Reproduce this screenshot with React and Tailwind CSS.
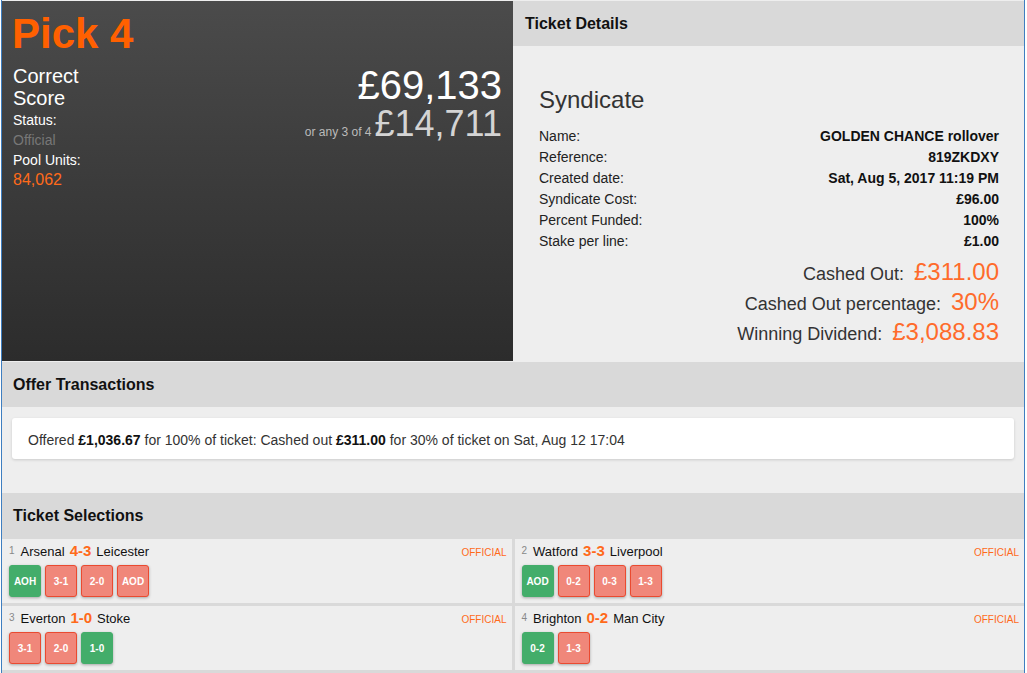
const details = [
  ["Name:", "GOLDEN CHANCE rollover"],
  ["Reference:", "819ZKDXY"],
  ["Created date:", "Sat, Aug 5, 2017 11:19 PM"],
  ["Syndicate Cost:", "£96.00"],
  ["Percent Funded:", "100%"],
  ["Stake per line:", "£1.00"],
];

const totals = [
  ["Cashed Out:", "£311.00"],
  ["Cashed Out percentage:", "30%"],
  ["Winning Dividend:", "£3,088.83"],
];

const selections = [
  { n: 1, home: "Arsenal", score: "4-3", away: "Leicester", picks: [["AOH", true], ["3-1", false], ["2-0", false], ["AOD", false]] },
  { n: 2, home: "Watford", score: "3-3", away: "Liverpool", picks: [["AOD", true], ["0-2", false], ["0-3", false], ["1-3", false]] },
  { n: 3, home: "Everton", score: "1-0", away: "Stoke", picks: [["3-1", false], ["2-0", false], ["1-0", true]] },
  { n: 4, home: "Brighton", score: "0-2", away: "Man City", picks: [["0-2", true], ["1-3", false]] },
];

function SectionHeader({ children }) {
  return (
    <div className="flex h-[45px] items-center bg-[#d9d9d9] px-[11px] text-base font-bold text-[#111]">
      {children}
    </div>
  );
}

function Pick({ label, win }) {
  return (
    <div
      className={
        win
          ? "flex h-8 w-8 items-center justify-center rounded-[3px] border border-[#43ad6a] bg-[#43ad6a] text-[10px] font-bold text-white shadow-[0_1px_3px_rgba(0,0,0,0.3)]"
          : "flex h-8 w-8 items-center justify-center rounded-[3px] border border-[#ea4a30] bg-[#f0877a] text-[10px] font-bold text-white shadow-[0_1px_3px_rgba(0,0,0,0.3)]"
      }
    >
      {label}
    </div>
  );
}

export default function App() {
  return (
    <div className="min-h-screen bg-white font-['Liberation_Sans',Arial,sans-serif]">
      <div className="ml-px w-[1024px] border-x border-[#3e7ec0] bg-[#eee] pt-px">
        <div className="grid grid-cols-2">
          <div className="h-[360px] bg-gradient-to-b from-[#4b4b4b] to-[#2c2c2c] pl-[10px] pr-[11px] pt-[10px]">
            <h1 className="text-[42px] font-bold leading-[46px] text-[#ff6000]">Pick 4</h1>
            <div className="mt-2 flex pl-px">
              <div className="w-[110px]">
                <div className="text-[20px] leading-[22px] text-white">Correct Score</div>
                <div className="pt-px text-sm leading-5 text-white">Status:</div>
                <div className="text-sm leading-5 text-[#777]">Official</div>
                <div className="text-sm leading-5 text-white">Pool Units:</div>
                <div className="text-base leading-5 text-[#ff6a1a]">84,062</div>
              </div>
              <div className="flex-1 text-right">
                <div className="text-[40px] leading-[40px] text-white">£69,133</div>
                <div className="leading-[38px]">
                  <span className="mr-[3px] text-xs text-[#bbb]">or any 3 of 4</span>
                  <span className="text-[36px] text-[#d4d4d4]">£14,711</span>
                </div>
              </div>
            </div>
          </div>

          <div className="flex h-[360px] flex-col">
            <div className="flex h-[45px] items-center bg-[#d9d9d9] px-3 text-base font-bold text-[#111]">
              Ticket Details
            </div>
            <div className="flex-1 bg-[#eee] pl-[26px] pr-[25px] pt-[39px]">
              <div className="mb-[11px] text-2xl leading-[30px] text-[#333]">Syndicate</div>
              {details.map(([k, v]) => (
                <div key={k} className="flex justify-between text-sm leading-[21px] text-[#222]">
                  <span>{k}</span>
                  <span className="font-bold text-[#111]">{v}</span>
                </div>
              ))}
              <div className="mt-[5px]">
                {totals.map(([k, v]) => (
                  <div key={k} className="flex h-[30px] items-baseline justify-end">
                    <span className="text-[18px] leading-[30px] text-[#333]">{k}</span>
                    <span className="ml-[10px] text-2xl leading-[30px] text-[#ff6b2b]">{v}</span>
                  </div>
                ))}
              </div>
            </div>
          </div>
        </div>

        <div className="mt-px">
          <SectionHeader>Offer Transactions</SectionHeader>
          <div className="bg-[#eee] px-[10px] pb-[33px] pt-[11px]">
            <div className="rounded-[3px] bg-white px-4 pb-[8px] pt-[12px] text-sm leading-[21px] text-[#333] shadow-[0_1px_3px_rgba(0,0,0,0.15)]">
              Offered <b className="text-[#111]">£1,036.67</b> for 100% of ticket: Cashed out{" "}
              <b className="text-[#111]">£311.00</b> for 30% of ticket on Sat, Aug 12 17:04
            </div>
          </div>
        </div>

        <div className="mt-px">
          <SectionHeader>Ticket Selections</SectionHeader>
          <div className="grid grid-cols-2 gap-[3px] bg-[#d9d9d9] pb-[3px] pt-px">
            {selections.map((s) => (
              <div key={s.n} className="h-[64px] bg-[#eee] pl-[7px] pr-[5px] pt-[3px]">
                <div className="flex items-center justify-between">
                  <div className="flex items-baseline text-[13px] leading-[18px] text-[#111]">
                    <span className="relative -top-[2px] mr-[6px] text-[10px] text-[#888]">{s.n}</span>
                    <span>{s.home}</span>
                    <span className="mx-[5px] text-[15px] font-bold text-[#ff6a1a]">{s.score}</span>
                    <span>{s.away}</span>
                  </div>
                  <span className="text-[10px] text-[#ff6a1a]">OFFICIAL</span>
                </div>
                <div className="mt-[3px] flex gap-1">
                  {s.picks.map(([label, win]) => (
                    <Pick key={label} label={label} win={win} />
                  ))}
                </div>
              </div>
            ))}
          </div>
        </div>
      </div>
    </div>
  );
}
